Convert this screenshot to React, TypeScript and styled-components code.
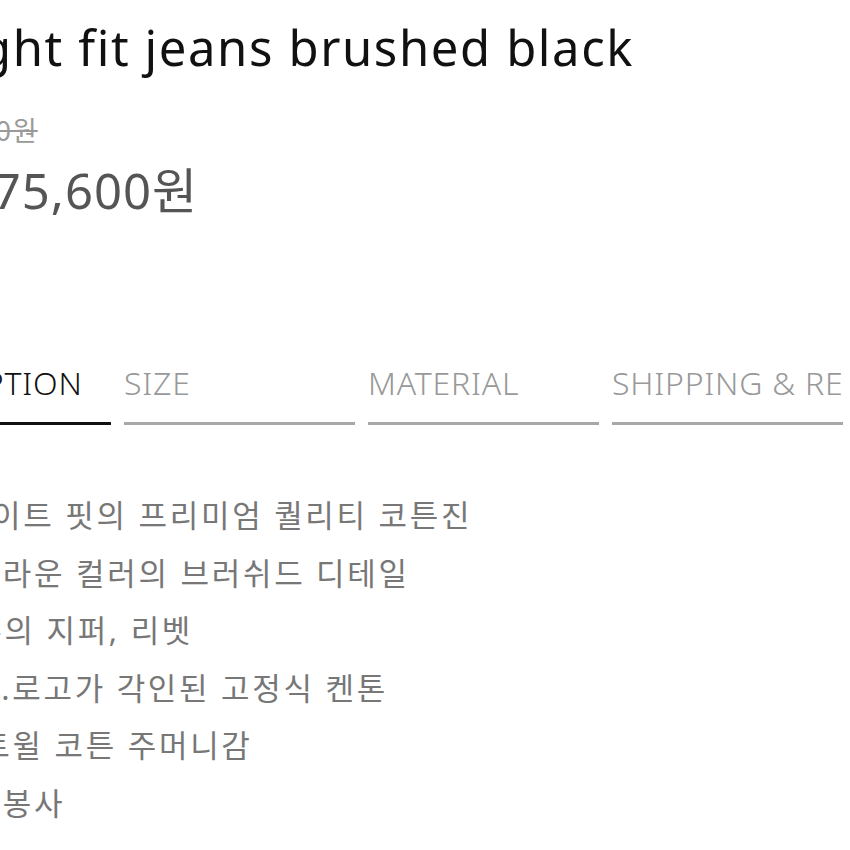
import React from "react";
import styled, { createGlobalStyle } from "styled-components";

const GlobalStyle = createGlobalStyle`
  html, body { margin: 0; padding: 0; background: #ffffff; overflow: hidden; }
  body { font-family: "Noto Sans", "Noto Sans CJK KR", sans-serif; }
`;

const Page = styled.div`
  width: 1000px;
  margin-left: -125px;
  padding-top: 20px;
  display: flex;
  flex-direction: column;
`;

const Title = styled.h1`
  margin: 0 0 0 -6px;
  font-size: 49px;
  font-weight: 400;
  letter-spacing: 1.6px;
  line-height: 1.12;
  color: #111;
  white-space: nowrap;
`;

const PriceBlock = styled.div`
  display: flex;
  flex-direction: column;
  margin-top: 40px;
`;

const OldPrice = styled.s`
  margin-left: 30px;
  font-size: 27px;
  letter-spacing: 1px;
  line-height: 1.2;
  color: #9a9a9a;
  text-decoration-thickness: 2px;
`;

const PriceRow = styled.div`
  display: flex;
  align-items: baseline;
  gap: 18px;
  margin-top: 14px;
  font-size: 49px;
  letter-spacing: 1px;
  line-height: 1.2;
`;

const Discount = styled.span`
  color: #e0403a;
`;

const Price = styled.span`
  color: #555;
`;

const Tabs = styled.div`
  display: grid;
  grid-template-columns: 238px repeat(3, 231px);
  column-gap: 13px;
  margin: 144px 0 0 -2px;
`;

const Tab = styled.div<{ $active?: boolean }>`
  font-size: 32px;
  font-weight: 300;
  line-height: 1;
  letter-spacing: 0.8px;
  white-space: nowrap;
  overflow: hidden;
  color: ${(p) => (p.$active ? "#111" : "#999")};
  padding-top: 3px;
  padding-bottom: 23px;
  border-bottom: 3px solid ${(p) => (p.$active ? "#111" : "#a8a8a8")};
`;

const List = styled.ul`
  list-style: none;
  margin: 62px 0 0 0;
  padding: 0;
`;

const Item = styled.li`
  font-size: 31px;
  letter-spacing: 2.7px;
  line-height: 57.5px;
  color: #777;
  white-space: nowrap;
`;

const lines = [
  "- 스트레이트 핏의 프리미엄 퀄리티 코튼진",
  "- 다크 브라운 컬러의 브러쉬드 디테일",
  "- YKK 톤의 지퍼, 리벳",
  "- LEVI'S.로고가 각인된 고정식 켄톤",
  "- 20수 트윌 코튼 주머니감",
  "- 탄탄한 봉사",
];

export default function App() {
  return (
    <>
      <GlobalStyle />
      <Page>
        <Title>Straight fit jeans brushed black</Title>
        <PriceBlock>
          <OldPrice>108,000원</OldPrice>
          <PriceRow>
            <Discount>30%</Discount>
            <Price>75,600원</Price>
          </PriceRow>
        </PriceBlock>
        <Tabs>
          <Tab $active>DESCRIPTION</Tab>
          <Tab>SIZE</Tab>
          <Tab>MATERIAL</Tab>
          <Tab>SHIPPING &amp; RETURNS</Tab>
        </Tabs>
        <List>
          {lines.map((l) => (
            <Item key={l}>{l}</Item>
          ))}
        </List>
      </Page>
    </>
  );
}
